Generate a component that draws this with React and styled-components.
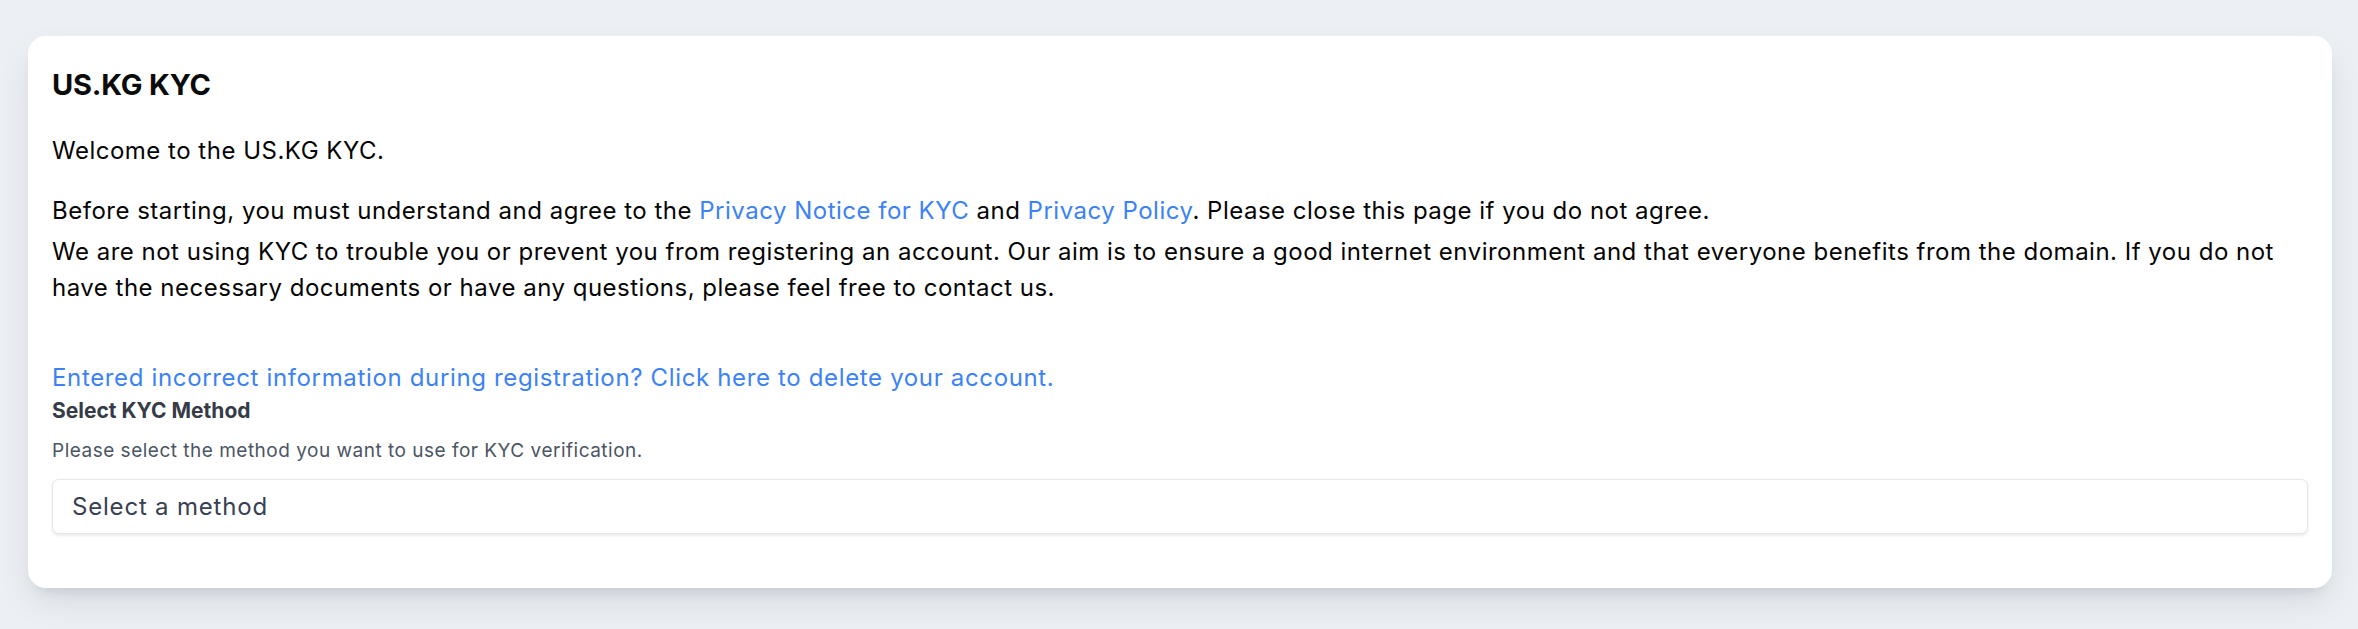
import React from 'react'
import styled, { createGlobalStyle } from 'styled-components'

const GlobalStyle = createGlobalStyle`
   html,
   body {
      margin: 0;
      padding: 0;
      background: #ecf0f4;
   }

   body {
      font-family: Inter, 'Noto Sans', 'Liberation Sans', sans-serif;
      color: #000000;
   }
`

function App() {
   return (
      <>
         <GlobalStyle />
         <Page>
            <Card>
               <Title>US.KG KYC</Title>
               <Text $gap="24px">Welcome to the US.KG KYC.</Text>
               <Text $gap="5px">
                  Before starting, you must understand and agree to the{' '}
                  <Link href="#">Privacy Notice for KYC</Link> and{' '}
                  <Link href="#">Privacy Policy</Link>. Please close this page
                  if you do not agree.
               </Text>
               <Text $gap="54px">
                  We are not using KYC to trouble you or prevent you from
                  registering an account. Our aim is to ensure a good internet
                  environment and that everyone benefits from the domain. If you
                  do not have the necessary documents or have any questions,
                  please feel free to contact us.
               </Text>
               <DeleteLink href="#">
                  Entered incorrect information during registration? Click here
                  to delete your account.
               </DeleteLink>
               <Field>
                  <Label>Select KYC Method</Label>
                  <Help>
                     Please select the method you want to use for KYC
                     verification.
                  </Help>
                  <Select>Select a method</Select>
               </Field>
            </Card>
         </Page>
      </>
   )
}

const Page = styled.div`
   min-height: 629px;
   box-sizing: border-box;
   padding: 36px 26px 0 28px;
`

const Card = styled.div`
   background: #ffffff;
   border-radius: 18px;
   padding: 28px 24px 54px;
   box-shadow: 0 15px 36px -6px rgba(15, 23, 42, 0.12),
      0 10px 14px -8px rgba(15, 23, 42, 0.1);
`

const Title = styled.h2`
   margin: 0 0 27px;
   font-size: 29px;
   line-height: 42px;
   font-weight: 700;
   letter-spacing: -0.2px;
   color: #0b0b0b;
`

const Text = styled.p`
   margin: 0 0 ${(p) => p.$gap};
   font-size: 24px;
   line-height: 36px;
   letter-spacing: 0.5px;
   color: #050505;
`

const Link = styled.a`
   color: #3b82f6;
   text-decoration: none;
`

const DeleteLink = styled.a`
   display: block;
   font-size: 24px;
   line-height: 36px;
   letter-spacing: 0.65px;
   color: #3b82f6;
   text-decoration: none;
`

const Field = styled.div`
   display: flex;
   flex-direction: column;
`

const Label = styled.label`
   font-size: 21px;
   line-height: 30px;
   font-weight: 700;
   color: #363c47;
`

const Help = styled.p`
   margin: 12px 0 15px;
   font-size: 19px;
   line-height: 26px;
   letter-spacing: 0.5px;
   color: #4b5563;
`

const Select = styled.div`
   box-sizing: border-box;
   height: 55px;
   display: flex;
   align-items: center;
   padding: 0 19px;
   border: 1.5px solid #e5e7eb;
   border-radius: 7px;
   background: #ffffff;
   box-shadow: 0 1.5px 3px rgba(0, 0, 0, 0.08);
   font-size: 24px;
   letter-spacing: 0.8px;
   color: #374151;
   cursor: pointer;
`

export default App
